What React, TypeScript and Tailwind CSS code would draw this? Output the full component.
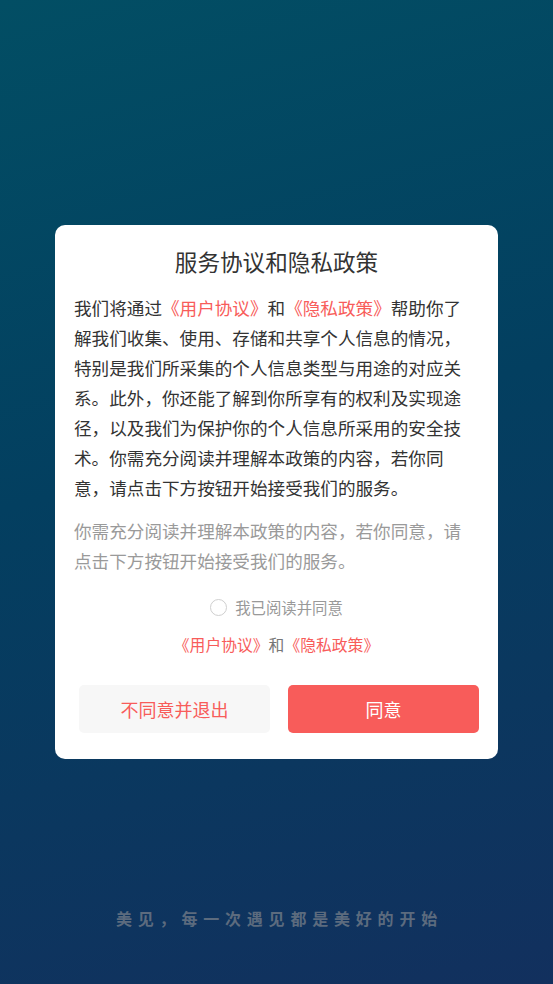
const cjk = "font-['Noto_Sans_CJK_SC','Noto_Sans',sans-serif]"

function Link({ children }: { children: React.ReactNode }) {
  return <span className="text-[#f85c5a]">{children}</span>
}

export default function App() {
  return (
    <div
      className={`flex h-screen min-h-[984px] flex-col items-center bg-[linear-gradient(165deg,#024e64_0%,#033f60_45%,#12305e_100%)] [text-spacing-trim:space-all] ${cjk}`}
    >
      <div className="mt-[225px] w-[443px] rounded-[10px] bg-white px-[19px] pt-[22px] pb-[26px]">
        <h2 className="text-center text-[22.6px] leading-[30px] text-[#333]">服务协议和隐私政策</h2>
        <p className="mt-[16px] w-[397px] text-[17.6px] leading-[30px] text-[#333]">
          我们将通过<Link>《用户协议》</Link>和<Link>《隐私政策》</Link>
          帮助你了解我们收集、使用、存储和共享个人信息的情况，特别是我们所采集的个人信息类型与用途的对应关系。此外，你还能了解到你所享有的权利及实现途径，以及我们为保护你的个人信息所采用的安全技术。你需充分阅读并理解本政策的内容，若你同意，请点击下方按钮开始接受我们的服务。
        </p>
        <p className="mt-[13px] w-[397px] text-[17.6px] leading-[30px] text-[#9a9a9a]">
          你需充分阅读并理解本政策的内容，若你同意，请点击下方按钮开始接受我们的服务。
        </p>
        <div className="mt-[21px] flex h-[20px] items-center justify-center gap-[8px]">
          <span className="h-[17px] w-[17px] rounded-full border border-[#cfcfcf]" />
          <span className="text-[15.4px] leading-[20px] text-[#999]">我已阅读并同意</span>
        </div>
        <div className="mt-[18px] text-center text-[15.8px] leading-[20px] text-[#777]">
          <Link>《用户协议》</Link>和<Link>《隐私政策》</Link>
        </div>
        <div className="mt-[30px] flex gap-[18px] pl-[5px]">
          <button className="h-[48px] flex-1 rounded-[5px] bg-[#f7f7f7] text-[18px] text-[#f85c5a]">
            不同意并退出
          </button>
          <button className="h-[48px] flex-1 rounded-[5px] bg-[#f85c5a] text-[18px] text-white">
            同意
          </button>
        </div>
      </div>
      <div className="flex-1" />
      <p className="pb-[54px] pl-[6px] text-[16px] font-bold leading-[24px] tracking-[5.8px] text-[#5c6b7e]">
        美见，每一次遇见都是美好的开始
      </p>
    </div>
  )
}
